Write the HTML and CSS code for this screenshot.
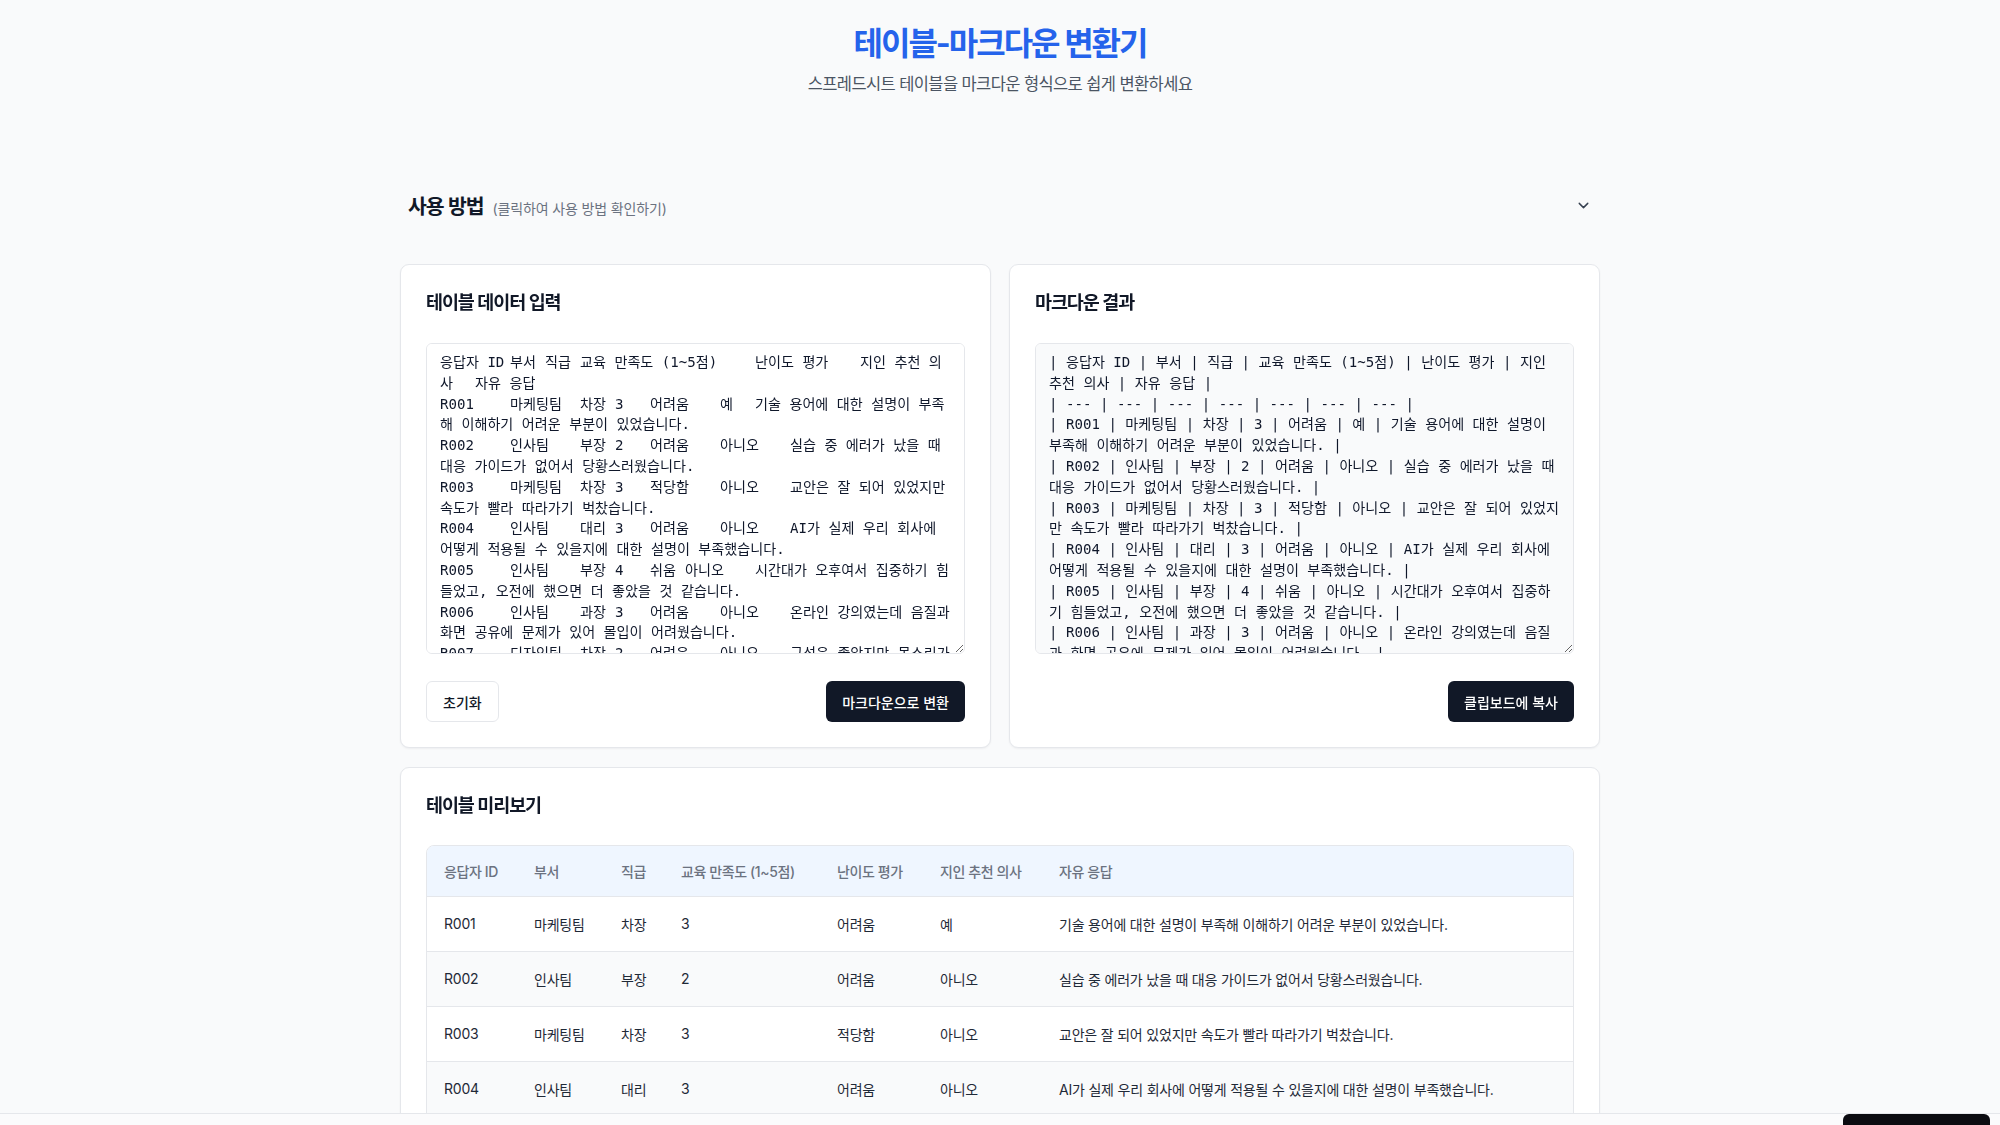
FILE: index.html
```html
<!DOCTYPE html>
<html lang="ko">
<head>
<meta charset="utf-8">
<title>테이블-마크다운 변환기</title>
<link rel="stylesheet" href="styles.css">
</head>
<body>
<main class="page">
  <header class="hero">
    <h1 class="hero-title">테이블-마크다운 변환기</h1>
    <p class="hero-sub">스프레드시트 테이블을 마크다운 형식으로 쉽게 변환하세요</p>
  </header>

  <button class="guide" type="button">
    <span class="guide-label"><span class="guide-title">사용 방법</span><span class="guide-hint">(클릭하여 사용 방법 확인하기)</span></span>
    <svg class="guide-chevron" viewBox="0 0 24 24" aria-hidden="true"><polyline points="6 9 12 15 18 9"/></svg>
  </button>

  <section class="io-grid">
    <div class="card">
      <h2 class="card-title">테이블 데이터 입력</h2>
      <textarea class="code code-input" spellcheck="false">응답자 ID&#9;부서&#9;직급&#9;교육 만족도 (1~5점)&#9;난이도 평가&#9;지인 추천 의사&#9;자유 응답
R001&#9;마케팅팀&#9;차장&#9;3&#9;어려움&#9;예&#9;기술 용어에 대한 설명이 부족해 이해하기 어려운 부분이 있었습니다.
R002&#9;인사팀&#9;부장&#9;2&#9;어려움&#9;아니오&#9;실습 중 에러가 났을 때 대응 가이드가 없어서 당황스러웠습니다.
R003&#9;마케팅팀&#9;차장&#9;3&#9;적당함&#9;아니오&#9;교안은 잘 되어 있었지만 속도가 빨라 따라가기 벅찼습니다.
R004&#9;인사팀&#9;대리&#9;3&#9;어려움&#9;아니오&#9;AI가 실제 우리 회사에 어떻게 적용될 수 있을지에 대한 설명이 부족했습니다.
R005&#9;인사팀&#9;부장&#9;4&#9;쉬움&#9;아니오&#9;시간대가 오후여서 집중하기 힘들었고, 오전에 했으면 더 좋았을 것 같습니다.
R006&#9;인사팀&#9;과장&#9;3&#9;어려움&#9;아니오&#9;온라인 강의였는데 음질과 화면 공유에 문제가 있어 몰입이 어려웠습니다.
R007&#9;디자인팀&#9;차장&#9;2&#9;어려움&#9;아니오&#9;구성은 좋았지만 목소리가 작아서 잘 들리지 않았습니다.
R008&#9;디자인팀&#9;대리&#9;4&#9;적당함&#9;예&#9;예제가 실무와 잘 맞아서 바로 활용할 수 있을 것 같습니다.</textarea>
      <div class="actions">
        <button class="btn btn-outline" type="button">초기화</button>
        <button class="btn btn-dark" type="button">마크다운으로 변환</button>
      </div>
    </div>

    <div class="card">
      <h2 class="card-title">마크다운 결과</h2>
      <textarea class="code code-output" spellcheck="false" readonly>| 응답자 ID | 부서 | 직급 | 교육 만족도 (1~5점) | 난이도 평가 | 지인 추천 의사 | 자유 응답 |
| --- | --- | --- | --- | --- | --- | --- |
| R001 | 마케팅팀 | 차장 | 3 | 어려움 | 예 | 기술 용어에 대한 설명이 부족해 이해하기 어려운 부분이 있었습니다. |
| R002 | 인사팀 | 부장 | 2 | 어려움 | 아니오 | 실습 중 에러가 났을 때 대응 가이드가 없어서 당황스러웠습니다. |
| R003 | 마케팅팀 | 차장 | 3 | 적당함 | 아니오 | 교안은 잘 되어 있었지만 속도가 빨라 따라가기 벅찼습니다. |
| R004 | 인사팀 | 대리 | 3 | 어려움 | 아니오 | AI가 실제 우리 회사에 어떻게 적용될 수 있을지에 대한 설명이 부족했습니다. |
| R005 | 인사팀 | 부장 | 4 | 쉬움 | 아니오 | 시간대가 오후여서 집중하기 힘들었고, 오전에 했으면 더 좋았을 것 같습니다. |
| R006 | 인사팀 | 과장 | 3 | 어려움 | 아니오 | 온라인 강의였는데 음질과 화면 공유에 문제가 있어 몰입이 어려웠습니다. |
| R007 | 디자인팀 | 차장 | 2 | 어려움 | 아니오 | 구성은 좋았지만 목소리가 작아서 잘 들리지 않았습니다. |
| R008 | 디자인팀 | 대리 | 4 | 적당함 | 예 | 예제가 실무와 잘 맞아서 바로 활용할 수 있을 것 같습니다. |</textarea>
      <div class="actions actions-end">
        <button class="btn btn-dark" type="button">클립보드에 복사</button>
      </div>
    </div>
  </section>

  <section class="card preview">
    <h2 class="card-title">테이블 미리보기</h2>
    <div class="table-wrap">
      <table class="grid-table">
        <colgroup>
          <col class="col-id"><col class="col-dept"><col class="col-rank"><col class="col-score"><col class="col-level"><col class="col-rec"><col>
        </colgroup>
        <thead>
          <tr><th>응답자 ID</th><th>부서</th><th>직급</th><th>교육 만족도 (1~5점)</th><th>난이도 평가</th><th>지인 추천 의사</th><th>자유 응답</th></tr>
        </thead>
        <tbody>
          <tr><td>R001</td><td>마케팅팀</td><td>차장</td><td>3</td><td>어려움</td><td>예</td><td>기술 용어에 대한 설명이 부족해 이해하기 어려운 부분이 있었습니다.</td></tr>
          <tr><td>R002</td><td>인사팀</td><td>부장</td><td>2</td><td>어려움</td><td>아니오</td><td>실습 중 에러가 났을 때 대응 가이드가 없어서 당황스러웠습니다.</td></tr>
          <tr><td>R003</td><td>마케팅팀</td><td>차장</td><td>3</td><td>적당함</td><td>아니오</td><td>교안은 잘 되어 있었지만 속도가 빨라 따라가기 벅찼습니다.</td></tr>
          <tr><td>R004</td><td>인사팀</td><td>대리</td><td>3</td><td>어려움</td><td>아니오</td><td>AI가 실제 우리 회사에 어떻게 적용될 수 있을지에 대한 설명이 부족했습니다.</td></tr>
          <tr><td>R005</td><td>인사팀</td><td>부장</td><td>4</td><td>쉬움</td><td>아니오</td><td>시간대가 오후여서 집중하기 힘들었고, 오전에 했으면 더 좋았을 것 같습니다.</td></tr>
          <tr><td>R006</td><td>인사팀</td><td>과장</td><td>3</td><td>어려움</td><td>아니오</td><td>온라인 강의였는데 음질과 화면 공유에 문제가 있어 몰입이 어려웠습니다.</td></tr>
          <tr><td>R007</td><td>디자인팀</td><td>차장</td><td>2</td><td>어려움</td><td>아니오</td><td>구성은 좋았지만 목소리가 작아서 잘 들리지 않았습니다.</td></tr>
          <tr><td>R008</td><td>디자인팀</td><td>대리</td><td>4</td><td>적당함</td><td>예</td><td>예제가 실무와 잘 맞아서 바로 활용할 수 있을 것 같습니다.</td></tr>
        </tbody>
      </table>
    </div>
  </section>
</main>

<div class="dock"><div class="dock-pill"></div></div>
</body>
</html>
```

FILE: styles.css
```css
* { box-sizing: border-box; }

html {
  scrollbar-width: none;
}
html::-webkit-scrollbar { display: none; }

body {
  margin: 0;
  background: #f9fafb;
  font-family: "Inter", "Noto Sans CJK KR", sans-serif;
  color: #111827;
}

.page {
  width: 1200px;
  margin: 0 auto;
  padding-top: 24px;
  padding-bottom: 40px;
}

/* header */
.hero { text-align: center; }
.hero-title {
  margin: 0;
  font-size: 32px;
  line-height: 40px;
  font-weight: 700;
  color: #2563eb;
  letter-spacing: -2px;
}
.hero-sub {
  margin: 8px 0 0;
  font-size: 16.5px;
  line-height: 24px;
  color: #4b5563;
  letter-spacing: -0.6px;
}

/* guide toggle */
.guide {
  margin-top: 89px;
  width: 100%;
  height: 40px;
  display: flex;
  align-items: center;
  justify-content: space-between;
  padding: 0 8px;
  background: none;
  border: 0;
  font: inherit;
  cursor: pointer;
}
.guide-label { display: flex; align-items: baseline; }
.guide-title {
  font-size: 20.5px;
  font-weight: 600;
  color: #111827;
  letter-spacing: -1px;
}
.guide-hint {
  margin-left: 9px;
  font-size: 14px;
  color: #6b7280;
  letter-spacing: -0.15px;
}
.guide-chevron {
  width: 17px;
  height: 17px;
  fill: none;
  stroke: #374151;
  stroke-width: 2;
  stroke-linecap: round;
  stroke-linejoin: round;
}

/* cards */
.io-grid {
  margin-top: 39px;
  display: grid;
  grid-template-columns: 1fr 1fr;
  gap: 18px;
}
.card {
  background: #fff;
  border: 1px solid #e5e7eb;
  border-radius: 9px;
  box-shadow: 0 1px 2px rgba(16, 24, 40, 0.05);
  padding: 25px;
}
.card-title {
  margin: 0;
  font-size: 18.5px;
  line-height: 24px;
  font-weight: 600;
  letter-spacing: -1.1px;
  color: #111827;
}

.code {
  display: block;
  width: 100%;
  height: 311px;
  margin: 29px 0 0;
  padding: 8px 11.7px 8px 13px;
  border: 1px solid #e5e7eb;
  border-radius: 6px;
  font-family: "DejaVu Sans Mono", "Noto Sans CJK KR", monospace;
  font-size: 14.1px;
  line-height: 20.8px;
  letter-spacing: 0;
  tab-size: 35px;
  color: #0f172a;
  background: #fff;
  outline: none;
  scrollbar-width: none;
}
.code::-webkit-scrollbar { display: none; }
.code-output { background: #f9fafb; }

.actions {
  margin-top: 27px;
  display: flex;
  justify-content: space-between;
  align-items: center;
}
.actions-end { justify-content: flex-end; }

.btn {
  height: 41px;
  padding: 0 16px;
  border-radius: 6px;
  font-family: inherit;
  font-size: 14px;
  font-weight: 500;
  letter-spacing: 0;
  cursor: pointer;
}
.btn-outline {
  background: #fff;
  border: 1px solid #e5e7eb;
  color: #111827;
}
.btn-dark {
  background: #111827;
  border: 0;
  color: #fff;
}

/* preview */
.preview { margin-top: 19px; }
.table-wrap {
  margin-top: 28px;
  border: 1px solid #e5e7eb;
  border-radius: 8px;
  overflow: hidden;
}
.grid-table {
  width: 100%;
  border-collapse: collapse;
  table-layout: fixed;
  font-size: 14px;
  letter-spacing: -0.2px;
}
.col-id { width: 90px; }
.col-dept { width: 87px; }
.col-rank { width: 60px; }
.col-score { width: 156px; }
.col-level { width: 103px; }
.col-rec { width: 119px; }

.grid-table th {
  height: 50px;
  padding: 0 17px;
  text-align: left;
  font-weight: 500;
  color: #6b7280;
  background: #eff6ff;
  white-space: nowrap;
  letter-spacing: -0.4px;
}
.grid-table td {
  height: 55px;
  padding: 0 17px;
  color: #1f2937;
  border-top: 1px solid #e5e7eb;
  white-space: nowrap;
}
.grid-table tbody tr:nth-child(even) td { background: #f9fafb; }

/* bottom dock strip */
.dock {
  position: fixed;
  left: 0;
  right: 0;
  bottom: 0;
  height: 12px;
  background: #fbfbfc;
  border-top: 1px solid #e5e7eb;
}
.dock-pill {
  position: absolute;
  left: 1843px;
  top: 0;
  width: 147px;
  height: 20px;
  background: #0b0b10;
  border-radius: 6px;
}
```
